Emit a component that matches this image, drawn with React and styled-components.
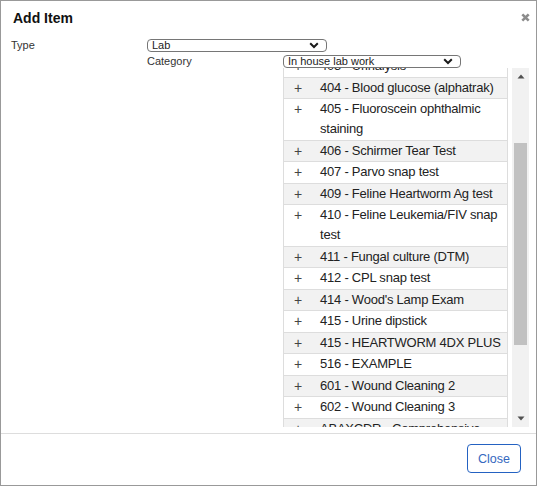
import React, { useLayoutEffect, useRef } from "react";
import styled, { createGlobalStyle } from "styled-components";

const GlobalStyle = createGlobalStyle`
    body {
        margin: 0;
        font-family: "Liberation Sans", Arial, sans-serif;
        background: #fff;
    }
`;

const Modal = styled.div`
    box-sizing: border-box;
    width: 537px;
    height: 486px;
    border: 1px solid #999;
    background: #fff;
    display: flex;
    flex-direction: column;
`;

const Header = styled.div`
    display: flex;
    align-items: center;
    justify-content: space-between;
    padding: 7px 6px 0 12px;
    height: 19px;
`;

const Title = styled.h4`
    margin: 0;
    font-size: 14px;
    font-weight: 700;
    color: #111;
`;

const CloseX = styled.span`
    display: flex;
    color: #8c8c8c;
`;

const Body = styled.div`
    flex: 1;
    padding: 12px 0 0 10px;
`;

const FieldRow = styled.div`
    display: grid;
    grid-template-columns: ${(p) => p.$label}px 1fr;
    margin-top: ${(p) => p.$top || 0}px;
`;

const Label = styled.div`
    font-size: 11px;
    line-height: 13px;
    color: #333;
`;

const Select = styled.div`
    box-sizing: border-box;
    width: ${(p) => p.$width}px;
    height: 13px;
    border: 1px solid #767676;
    border-radius: 4px;
    display: flex;
    align-items: center;
    justify-content: space-between;
    padding: 0 7px 0 4px;
    font-size: 11px;
    line-height: 11px;
    color: #222;
`;

const ListBox = styled.div`
    display: flex;
    width: 246px;
    height: 359px;
`;

const Rows = styled.div`
    position: relative;
    flex: 1;
    overflow: hidden;
    padding-right: 4px;
`;

const Row = styled.div`
    display: flex;
    border: 1px solid #ddd;
    border-top: none;
    padding: 0.25px 0;
    font-size: 13px;
    letter-spacing: -0.23px;
    line-height: 20px;
    color: #222;
    &:nth-child(even) {
        background: #f2f2f2;
    }
`;

const Plus = styled.div`
    width: 28px;
    flex: none;
    text-align: center;
    color: #444;
    font-size: 14px;
    letter-spacing: 0;
`;

const ItemText = styled.div`
    flex: 1;
    padding: 0 2px 0 8px;
`;

const Scrollbar = styled.div`
    width: 17px;
    flex: none;
    background: #f1f1f1;
    display: flex;
    flex-direction: column;
`;

const ArrowButton = styled.div`
    height: 17px;
    flex: none;
    display: flex;
    align-items: center;
    justify-content: center;
`;

const Track = styled.div`
    flex: 1;
    display: flex;
    flex-direction: column;
`;

const TrackGap = styled.div`
    flex: ${(p) => p.$grow};
`;

const Thumb = styled.div`
    flex: ${(p) => p.$grow};
    margin: 0 2px;
    background: #c1c1c1;
`;

const Footer = styled.div`
    display: flex;
    justify-content: flex-end;
    border-top: 1px solid #ddd;
    padding: 10px 15px 12px 0;
`;

const Button = styled.button`
    box-sizing: border-box;
    height: 29px;
    width: 54px;
    border: 1px solid #2462c2;
    border-radius: 4px;
    background: #fff;
    color: #3568c0;
    font-family: "Liberation Sans", Arial, sans-serif;
    font-size: 12.5px;
    padding: 0;
`;

const items = [
    "403 - Urinalysis",
    "404 - Blood glucose (alphatrak)",
    "405 - Fluoroscein ophthalmic staining",
    "406 - Schirmer Tear Test",
    "407 - Parvo snap test",
    "409 - Feline Heartworm Ag test",
    "410 - Feline Leukemia/FIV snap test",
    "411 - Fungal culture (DTM)",
    "412 - CPL snap test",
    "414 - Wood's Lamp Exam",
    "415 - Urine dipstick",
    "415 - HEARTWORM 4DX PLUS",
    "516 - EXAMPLE",
    "601 - Wound Cleaning 2",
    "602 - Wound Cleaning 3",
    "ABAXCDR - Comprehensive Diagnostic Profile",
    "ABAXPRE - Pre-anesthetic Profile",
];

function Chevron() {
    return (
        <svg width="10" height="7" viewBox="0 0 10 7">
            <path d="M1.2 1.3 L5 5 L8.8 1.3" fill="none" stroke="#1a1a1a" strokeWidth="2" />
        </svg>
    );
}

function Arrow({ down }) {
    return (
        <svg width="8" height="5" viewBox="0 0 8 5">
            <path d={down ? "M0.5 0.5 L7.5 0.5 L4 4.5 Z" : "M0.5 4.5 L7.5 4.5 L4 0.5 Z"} fill="#505050" />
        </svg>
    );
}

function ItemList() {
    const listRef = useRef(null);
    const rowRef = useRef(null);

    useLayoutEffect(() => {
        // keep "404" 10px below the top, the first row is cut off
        listRef.current.scrollTop = rowRef.current.offsetTop - 10;
    }, []);

    return (
        <ListBox>
            <Rows ref={listRef}>
                {items.map((item, i) => (
                    <Row key={item} ref={i === 1 ? rowRef : null}>
                        <Plus>+</Plus>
                        <ItemText>{item}</ItemText>
                    </Row>
                ))}
            </Rows>
            <Scrollbar>
                <ArrowButton>
                    <Arrow />
                </ArrowButton>
                <Track>
                    <TrackGap $grow={58} />
                    <Thumb $grow={201} />
                    <TrackGap $grow={65} />
                </Track>
                <ArrowButton>
                    <Arrow down />
                </ArrowButton>
            </Scrollbar>
        </ListBox>
    );
}

export default function App() {
    return (
        <>
            <GlobalStyle />
            <Modal>
                <Header>
                    <Title>Add Item</Title>
                    <CloseX>
                        <svg width="9" height="9" viewBox="0 0 9 9">
                            <path d="M1.3 1.3 L7.7 7.7 M7.7 1.3 L1.3 7.7" stroke="currentColor" strokeWidth="2.6" />
                        </svg>
                    </CloseX>
                </Header>
                <Body>
                    <FieldRow $label={136}>
                        <Label>Type</Label>
                        <div>
                            <Select $width={180}>
                                Lab <Chevron />
                            </Select>
                            <FieldRow $label={136} $top={3}>
                                <Label>Category</Label>
                                <div>
                                    <Select $width={178}>
                                        In house lab work <Chevron />
                                    </Select>
                                    <ItemList />
                                </div>
                            </FieldRow>
                        </div>
                    </FieldRow>
                </Body>
                <Footer>
                    <Button>Close</Button>
                </Footer>
            </Modal>
        </>
    );
}
